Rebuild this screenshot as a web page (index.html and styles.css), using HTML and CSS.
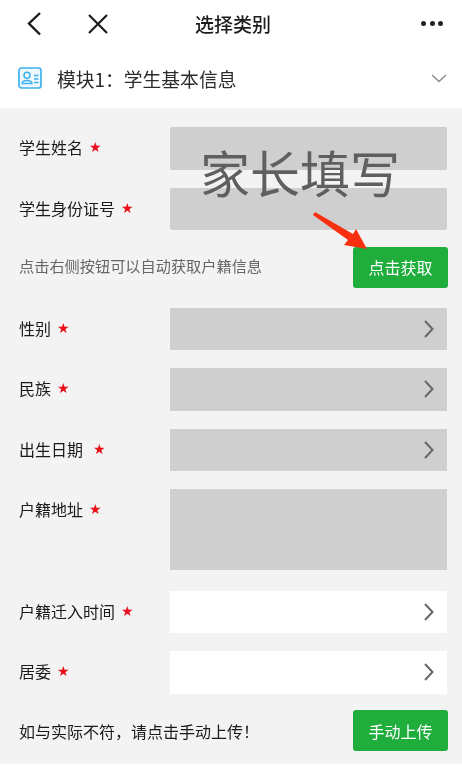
FILE: index.html
```html
<!DOCTYPE html>
<html lang="zh-CN">
<head>
<meta charset="utf-8">
<title>选择类别</title>
<link rel="stylesheet" href="styles.css">
</head>
<body>
<div class="page">
  <header class="nav">
    <svg class="nav-back" width="18" height="26" viewBox="0 0 18 26"><path d="M15 2 L4 12.5 L15 23.5" fill="none" stroke="#1c1c1c" stroke-width="2.4"/></svg>
    <svg class="nav-close" width="22" height="22" viewBox="0 0 22 22"><path d="M2 2 L20 20 M20 2 L2 20" fill="none" stroke="#1c1c1c" stroke-width="2.2"/></svg>
    <h1 class="nav-title">选择类别</h1>
    <div class="nav-more"><i></i><i></i><i></i></div>
  </header>
  <div class="module">
    <svg class="module-icon" width="24" height="22" viewBox="0 0 24 22"><rect x="1" y="1" width="22" height="20" rx="2.5" fill="#eef8fd" stroke="#3fb2ee" stroke-width="1.7"/><circle cx="9" cy="8.2" r="3" fill="none" stroke="#3fb2ee" stroke-width="1.5"/><path d="M4 16.5 C4.5 12.5 13.5 12.5 14 16.5 Z" fill="none" stroke="#3fb2ee" stroke-width="1.5"/><path d="M16 8.5h4.5M16 12h4.5M16 15.5h4.5" stroke="#3fb2ee" stroke-width="1.3"/></svg>
    <span class="module-name">模块1：学生基本信息</span>
    <svg class="module-caret" width="16" height="9" viewBox="0 0 16 9"><path d="M1 1 L8 7.5 L15 1" fill="none" stroke="#8a8a8a" stroke-width="1.4"/></svg>
  </div>
  <main class="form">
    <div class="row"><label class="label">学生姓名<b class="star">★</b></label><div class="field masked rounded"></div></div>
    <div class="row"><label class="label">学生身份证号<b class="star">★</b></label><div class="field masked rounded"></div></div>
    <div class="action-row"><span class="hint">点击右侧按钮可以自动获取户籍信息</span><button class="btn">点击获取</button></div>
    <div class="row"><label class="label">性别<b class="star">★</b></label><div class="field masked"><svg class="chev" width="10" height="18" viewBox="0 0 10 18"><path d="M1 1 L8.5 9 L1 17" fill="none" stroke="#666" stroke-width="2"/></svg></div></div>
    <div class="row"><label class="label">民族<b class="star">★</b></label><div class="field masked"><svg class="chev" width="10" height="18" viewBox="0 0 10 18"><path d="M1 1 L8.5 9 L1 17" fill="none" stroke="#666" stroke-width="2"/></svg></div></div>
    <div class="row"><label class="label">出生日期<b class="star wide">★</b></label><div class="field masked"><svg class="chev" width="10" height="18" viewBox="0 0 10 18"><path d="M1 1 L8.5 9 L1 17" fill="none" stroke="#666" stroke-width="2"/></svg></div></div>
    <div class="row"><label class="label">户籍地址<b class="star">★</b></label><div class="field masked tall"></div></div>
    <div class="row"><label class="label">户籍迁入时间<b class="star">★</b></label><div class="field"><svg class="chev" width="10" height="18" viewBox="0 0 10 18"><path d="M1 1 L8.5 9 L1 17" fill="none" stroke="#666" stroke-width="2"/></svg></div></div>
    <div class="row"><label class="label">居委<b class="star">★</b></label><div class="field"><svg class="chev" width="10" height="18" viewBox="0 0 10 18"><path d="M1 1 L8.5 9 L1 17" fill="none" stroke="#666" stroke-width="2"/></svg></div></div>
    <div class="action-row last"><span class="hint dark">如与实际不符，请点击手动上传！</span><button class="btn">手动上传</button></div>
    <div class="watermark">家长填写</div>
    <svg class="arrow" width="56" height="42" viewBox="0 0 56 42"><path d="M0 3 L2 0 L40 22 L43 17 L54 37 L31 33 L35 28 Z" fill="#f9300f"/></svg>
  </main>
</div>
</body>
</html>
```
FILE: styles.css
```css
* { box-sizing: border-box; }
html, body { margin: 0; padding: 0; background: #fff; }
body { font-family: "Noto Sans CJK SC", "Noto Sans", sans-serif; color: #222; }
.page { width: 462px; height: 775px; overflow: hidden; background: #fff; filter: blur(0.35px); }

.nav { position: relative; height: 50px; display: flex; align-items: flex-start; justify-content: center; padding: 0 0 0 4px; }
.nav-back { position: absolute; left: 25px; top: 11px; }
.nav-close { position: absolute; left: 87px; top: 13px; }
.nav-title { margin: 0; font-size: 19px; font-weight: 500; line-height: 48px; color: #1c1c1c; }
.nav-more { position: absolute; left: 421px; top: 21px; display: flex; gap: 3.5px; }
.nav-more i { width: 5px; height: 5px; border-radius: 50%; background: #222; }

.module { height: 58px; display: flex; align-items: center; padding: 0 15px 2px 18px; }
.module-icon { flex: none; }
.module-name { margin-left: 15px; font-size: 18.8px; color: #2c2c2c; flex: 1; white-space: nowrap; }
.module-caret { flex: none; }

.form { position: relative; height: 656px; background: #f3f3f3; padding-top: 19px; }
.row { display: flex; align-items: flex-start; margin-bottom: 18px; }
.label { display: block; width: 170px; height: 42px; overflow: hidden; padding-left: 19px; font-size: 16px; line-height: 41px; color: #1a1a1a; white-space: nowrap; }
.star { display: inline-block; height: 42px; line-height: 40px; color: #e8101a; font-size: 14px; font-weight: 400; margin-left: 6px; font-family: "DejaVu Sans", sans-serif; vertical-align: top; }
.star.wide { margin-left: 10px; }
.field { width: 277px; height: 42.5px; background: #fff; display: flex; align-items: center; justify-content: flex-end; padding-right: 13px; }
.masked { background: #cfcfcf; }
.rounded { border-radius: 2px; }
.tall { height: 81px; margin-bottom: 2.5px; }
.chev { flex: none; }

.action-row { display: flex; align-items: center; justify-content: space-between; padding: 0 14px 0 19px; height: 41px; margin-top: -1.5px; margin-bottom: 20px; }
.action-row.last { margin-bottom: 0; }
.hint { font-size: 15.2px; line-height: 38px; padding-bottom: 4px; color: #666; white-space: nowrap; }
.hint.dark { font-size: 16px; padding-bottom: 0; color: #1a1a1a; }
.btn { width: 95px; height: 41px; border: 0; border-radius: 3px; background: #1fad3c; color: #fff; font: inherit; font-size: 16px; line-height: 38px; padding: 0; }

.watermark { position: absolute; left: 200px; top: 33px; font-size: 50px; line-height: 60px; color: #5f5f5f; white-space: nowrap; }
.arrow { position: absolute; left: 313px; top: 104px; }
```
